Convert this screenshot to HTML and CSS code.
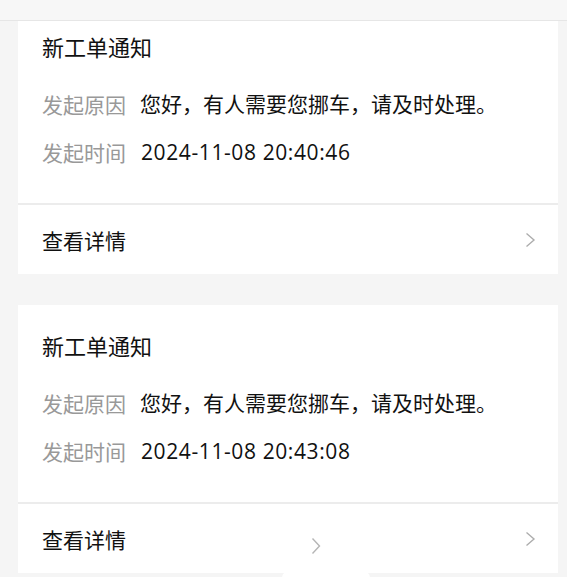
FILE: index.html
```html
<!DOCTYPE html>
<html lang="zh-CN">
<head>
<meta charset="UTF-8">
<meta name="viewport" content="width=device-width, initial-scale=1.0">
<title>工单通知</title>
<link rel="stylesheet" href="styles.css">
</head>
<body>
<div class="page">
    <div class="top-bar"></div>
    <div class="scroll">
        <div class="list">
            <div class="card">
                <div class="card-body">
                    <div class="card-title">新工单通知</div>
                    <div class="row row-first">
                        <span class="label">发起原因</span>
                        <span class="value">您好，有人需要您挪车，请及时处理。</span>
                    </div>
                    <div class="row">
                        <span class="label">发起时间</span>
                        <span class="value time">2024-11-08 20:40:46</span>
                    </div>
                </div>
                <div class="card-foot">
                    <span>查看详情</span>
                    <svg class="arrow" width="11" height="16" viewBox="0 0 11 16"><polyline points="1.5,1.5 9,8 1.5,14.5" fill="none" stroke="#adadad" stroke-width="1.4"/></svg>
                </div>
            </div>
            <div class="card">
                <div class="card-body">
                    <div class="card-title">新工单通知</div>
                    <div class="row row-first">
                        <span class="label">发起原因</span>
                        <span class="value">您好，有人需要您挪车，请及时处理。</span>
                    </div>
                    <div class="row">
                        <span class="label">发起时间</span>
                        <span class="value time">2024-11-08 20:43:08</span>
                    </div>
                </div>
                <div class="card-foot">
                    <span>查看详情</span>
                    <svg class="arrow" width="11" height="16" viewBox="0 0 11 16"><polyline points="1.5,1.5 9,8 1.5,14.5" fill="none" stroke="#adadad" stroke-width="1.4"/></svg>
                </div>
            </div>
        </div>
    </div>
    <!-- 浮动的下拉提示 -->
    <div class="float-tip">
        <svg width="10" height="18" viewBox="0 0 10 18"><polyline points="1.5,1.5 8.5,9 1.5,16.5" fill="none" stroke="#b5b5b5" stroke-width="1.4"/></svg>
    </div>
    <div class="float-blob"></div>
</div>
</body>
</html>
```

FILE: styles.css
```css
body {
    font-family: "Noto Sans CJK SC", "Noto Sans", sans-serif;
    margin: 0;
    padding: 0;
    background-color: #f5f5f5;
    color: #111;
}
.page {
    position: relative;
    height: 577px;
    overflow: hidden;
}
.top-bar {
    height: 20px;
    background-color: #f7f7f7;
    border-bottom: 1px solid #e6e6e6;
}
.scroll {
    height: 556px;
    overflow: hidden;
}
.list {
    margin-top: -15px;
    display: flex;
    flex-direction: column;
    gap: 31px;
}
.card {
    margin: 0 9px 0 18px;
    background-color: #fff;
}
.card-body {
    padding: 25px 24px 36px;
    border-bottom: 2px solid #ececec;
}
.card-title {
    font-size: 22px;
    line-height: 30px;
}
.row {
    display: flex;
    font-size: 21px;
    line-height: 30px;
    margin-top: 18px;
}
.row-first {
    margin-top: 28px;
}
.label {
    color: #999;
    margin-right: 14px;
}
.value {
    font-family: "Open Sans", "Noto Sans CJK SC", sans-serif;
}
.time {
    margin-left: 1px;
    letter-spacing: 0.6px;
}
.card-foot {
    height: 69px;
    padding: 0 22px 0 24px;
    display: flex;
    align-items: center;
    justify-content: space-between;
    font-size: 21px;
}
.arrow {
    display: block;
}
.float-tip {
    position: absolute;
    left: 311px;
    top: 537px;
}
.float-tip svg {
    display: block;
}
.float-blob {
    position: absolute;
    left: 282px;
    top: 571px;
    width: 88px;
    height: 14px;
    background-color: #fff;
    border-radius: 40px;
}
```
